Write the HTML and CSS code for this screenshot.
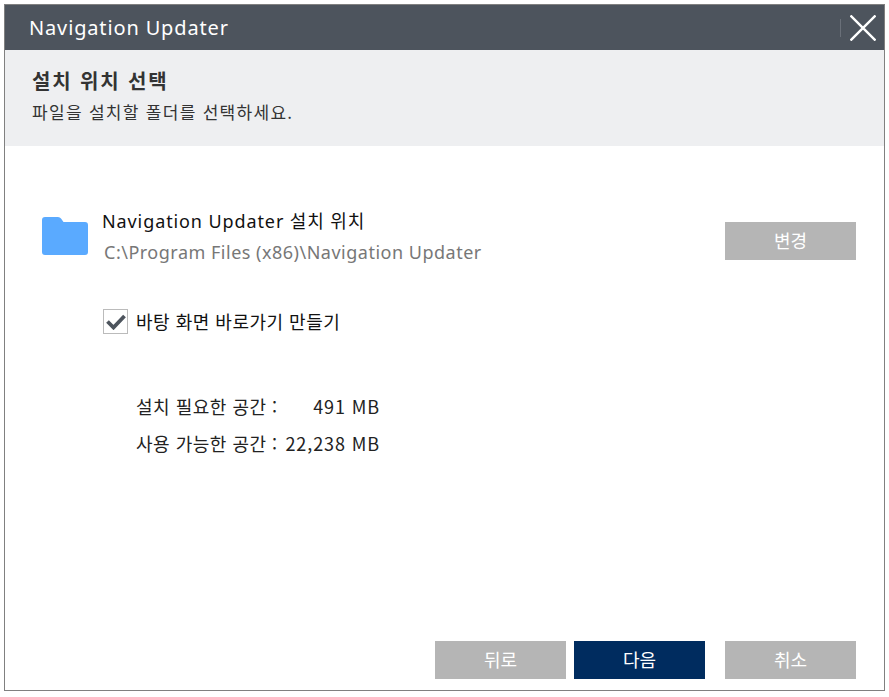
FILE: index.html
```html
<!DOCTYPE html>
<html lang="ko">
<head>
  <meta charset="UTF-8">
  <title>Navigation Updater</title>
  <link rel="stylesheet" href="styles.css">
</head>
<body>
  <div class="window">
    <div class="titlebar">
      <span class="title">Navigation Updater</span>
      <span class="title-sep"></span>
      <svg class="close" width="26" height="26" viewBox="0 0 26 26"><path d="M0.500 0.500L25.500 25.500M25.500 0.500L0.500 25.500" stroke="#fff" stroke-width="2.400" fill="none"/></svg>
    </div>
    <div class="header">
      <h1>설치 위치 선택</h1>
      <p>파일을 설치할 폴더를 선택하세요.</p>
    </div>
    <div class="content">
      <div class="location">
        <svg class="folder" width="46" height="38" viewBox="0 0 46 38"><path d="M0 3Q0 0 3 0H16Q18 0 19 1.500L21.500 5H43Q46 5 46 8V35Q46 38 43 38H3Q0 38 0 35Z" fill="#5aaaff"/></svg>
        <div class="location-text">
          <div class="location-name">Navigation Updater 설치 위치</div>
          <div class="location-path">C:\Program Files (x86)\Navigation Updater</div>
        </div>
        <button class="btn btn-change">변경</button>
      </div>
      <div class="shortcut">
        <span class="checkbox">
          <svg width="20" height="17" viewBox="0 0 20 17"><path d="M1.500 8.500L7.500 14.500L18.500 3" stroke="#4d545d" stroke-width="3.800" fill="none"/></svg>
        </span>
        <span>바탕 화면 바로가기 만들기</span>
      </div>
      <div class="space">
        <div class="space-row"><span>설치 필요한 공간 :</span><span class="space-value">491 MB</span></div>
        <div class="space-row"><span>사용 가능한 공간 :</span><span class="space-value">22,238 MB</span></div>
      </div>
    </div>
    <div class="footer">
      <button class="btn">뒤로</button>
      <button class="btn btn-primary">다음</button>
      <button class="btn btn-cancel">취소</button>
    </div>
  </div>
</body>
</html>
```

FILE: styles.css
```css
body {
  margin: 0;
  padding: 4px;
  background: #fff;
  font-family: "Noto Sans CJK KR", "Noto Sans", sans-serif;
  color: #222;
}

.window {
  box-sizing: border-box;
  width: 881px;
  height: 687px;
  border: 1px solid #808080;
  display: flex;
  flex-direction: column;
  background: #fff;
}

.titlebar {
  height: 45px;
  flex: none;
  background: #4d545d;
  display: flex;
  align-items: center;
  color: #fff;
  padding: 0 8px 0 24px;
}

.title {
  font-family: "Noto Sans", sans-serif;
  font-size: 20px;
  letter-spacing: 0.85px;
  flex: 1;
}

.title-sep {
  width: 1px;
  height: 18px;
  background: #6a7079;
  margin-right: 9px;
}

.close {
  display: block;
}

.header {
  height: 96px;
  flex: none;
  box-sizing: border-box;
  background: #eeeff1;
  padding: 17px 27px 0;
}

.header h1 {
  margin: 0;
  font-size: 20px;
  font-weight: 700;
  line-height: 28px;
  letter-spacing: 1.85px;
  color: #333;
}

.header p {
  margin: 5px 0 0;
  font-size: 17px;
  line-height: 24px;
  letter-spacing: 1.3px;
  color: #333;
}

.content {
  flex: 1;
  padding: 61px 28px 0 37px;
}

.location {
  display: flex;
  align-items: flex-start;
}

.folder {
  flex: none;
  margin-top: 10px;
}

.location-text {
  flex: 1;
  margin-left: 15px;
}

.location-name {
  font-family: "Noto Sans", "Noto Sans CJK KR", sans-serif;
  font-size: 18px;
  line-height: 28px;
  letter-spacing: 0.9px;
  margin-left: -1px;
  color: #111;
}

.location-path {
  font-family: "Noto Sans", sans-serif;
  font-size: 18px;
  line-height: 32px;
  letter-spacing: 0.5px;
  margin: 1px 0 0 1px;
  color: #777;
}

.btn {
  width: 131px;
  height: 38px;
  border: none;
  padding: 0 0 3px;
  background: #b5b5b5;
  color: #fff;
  font: inherit;
  font-size: 18px;
  flex: none;
}

.btn-change {
  margin-top: 15px;
}

.btn-primary {
  background: #002c5f;
}

.btn-cancel {
  margin-left: 12px;
}

.shortcut {
  display: flex;
  align-items: center;
  gap: 8px;
  margin: 41px 0 0 61px;
  font-size: 18px;
  line-height: 25px;
  letter-spacing: 0.5px;
  color: #111;
}

.checkbox {
  box-sizing: border-box;
  width: 25px;
  height: 25px;
  border: 1px solid #bbb;
  display: flex;
  align-items: center;
  justify-content: center;
}

.space {
  margin: 54px 0 0 94px;
  font-size: 18px;
  letter-spacing: 0.5px;
  color: #222;
}

.space-row {
  width: 244px;
  display: flex;
  justify-content: space-between;
  line-height: 37px;
}

.space-value {
  letter-spacing: 0.9px;
}

.footer {
  flex: none;
  display: flex;
  justify-content: flex-end;
  gap: 8px;
  padding: 0 28px 11px 0;
}
```
